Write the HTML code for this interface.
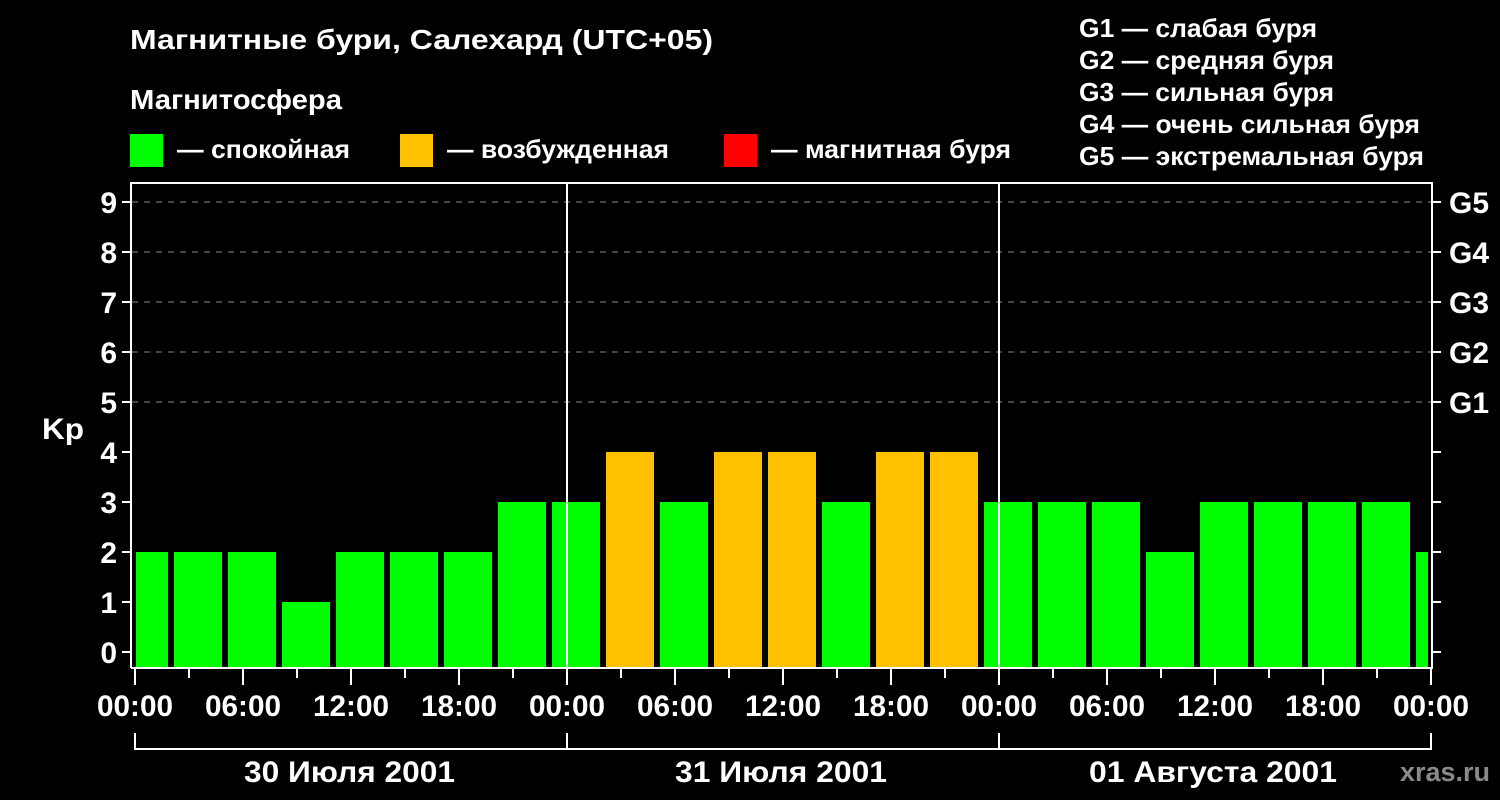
<!DOCTYPE html><html><head><style>body{margin:0;background:#000}svg{display:block}text{font-family:"Liberation Sans",Arial,sans-serif;font-weight:bold;fill:#fff}</style></head><body>
<svg width="1500" height="800" viewBox="0 0 1500 800">
<rect width="1500" height="800" fill="#000"/>
<text x="130" y="49" font-size="28" textLength="583" lengthAdjust="spacingAndGlyphs">Магнитные бури, Салехард (UTC+05)</text>
<text x="130" y="109" font-size="28" textLength="212" lengthAdjust="spacingAndGlyphs">Магнитосфера</text>
<rect x="130" y="134" width="33" height="33" fill="#00ff00"/><text x="177" y="158" font-size="26" textLength="173" lengthAdjust="spacingAndGlyphs">— спокойная</text>
<rect x="400" y="134" width="33" height="33" fill="#ffc000"/><text x="447" y="158" font-size="26" textLength="222" lengthAdjust="spacingAndGlyphs">— возбужденная</text>
<rect x="724" y="134" width="33" height="33" fill="#ff0000"/><text x="771" y="158" font-size="26" textLength="240" lengthAdjust="spacingAndGlyphs">— магнитная буря</text>
<g font-size="26"><text x="1079" y="37" textLength="238" lengthAdjust="spacingAndGlyphs">G1 — слабая буря</text><text x="1079" y="69" textLength="255" lengthAdjust="spacingAndGlyphs">G2 — средняя буря</text><text x="1079" y="101" textLength="255" lengthAdjust="spacingAndGlyphs">G3 — сильная буря</text><text x="1079" y="133" textLength="341" lengthAdjust="spacingAndGlyphs">G4 — очень сильная буря</text><text x="1079" y="165" textLength="345" lengthAdjust="spacingAndGlyphs">G5 — экстремальная буря</text></g>
<g id="bars"></g>
<g stroke="#888" stroke-width="1" stroke-dasharray="6,6">
<line x1="132" y1="202" x2="1432" y2="202"/><line x1="132" y1="252" x2="1432" y2="252"/><line x1="132" y1="302" x2="1432" y2="302"/><line x1="132" y1="352" x2="1432" y2="352"/><line x1="132" y1="402" x2="1432" y2="402"/>
</g>
<g stroke="#fff" stroke-width="2" fill="none">
<polyline points="131,668 131,183 1432,183 1432,668 131,668"/>
<line x1="567" y1="183" x2="567" y2="668"/><line x1="999" y1="183" x2="999" y2="668"/>
<polyline points="135,733 135,749 1431,749 1431,733"/><line x1="567" y1="733" x2="567" y2="749"/><line x1="999" y1="733" x2="999" y2="749"/>
</g>
<g id="ticks" stroke="#fff" stroke-width="2"></g>
<g font-size="30" text-anchor="end" id="yl"></g>
<text x="42" y="439" font-size="30" textLength="42" lengthAdjust="spacingAndGlyphs">Kp</text>
<g font-size="30">
<text x="244" y="782" textLength="211" lengthAdjust="spacingAndGlyphs">30 Июля 2001</text><text x="675" y="782" textLength="212" lengthAdjust="spacingAndGlyphs">31 Июля 2001</text><text x="1089" y="782" textLength="248" lengthAdjust="spacingAndGlyphs">01 Августа 2001</text>
</g>
<g font-size="30" text-anchor="start"><text x="1449" y="213">G5</text><text x="1449" y="263">G4</text><text x="1449" y="313">G3</text><text x="1449" y="363">G2</text><text x="1449" y="413">G1</text></g>
<g id="xl" font-size="30" text-anchor="middle"></g>
<text x="1490" y="781" font-size="27" text-anchor="end" style="fill:#8a8a8a">xras.ru</text>
</svg>
<script>
var ns="http://www.w3.org/2000/svg";function el(p,t,a,txt){var e=document.createElementNS(ns,t);for(var k in a)e.setAttribute(k,a[k]);if(txt!=null)e.textContent=txt;document.getElementById(p).appendChild(e);}
var v=[2,2,2,1,2,2,2,3,3,4,3,4,4,3,4,4,3,3,3,2,3,3,3,3,2];
v.forEach(function(k,i){var x1=Math.max(136,120+54*i),x2=Math.min(1428,168+54*i);var top=652-50*k;el("bars","rect",{x:x1,y:top,width:x2-x1,height:668-top,fill:k>=4?"#ffc000":"#00ff00"});});
for(var k=0;k<=9;k++){var y=652-50*k;el("ticks","line",{x1:122,y1:y,x2:131,y2:y});el("ticks","line",{x1:1432,y1:y,x2:1441,y2:y});el("yl","text",{x:117,y:y+11},String(k));}
var lab=["00:00","06:00","12:00","18:00"];
for(var h=0;h<=72;h+=3){var x=135+18*h;el("ticks","line",{x1:x,y1:669,x2:x,y2:h%6==0?685:678});if(h%6==0)el("xl","text",{x:x,y:716,textLength:76,lengthAdjust:"spacingAndGlyphs"},lab[(h/6)%4]);}
</script>
</body></html>
